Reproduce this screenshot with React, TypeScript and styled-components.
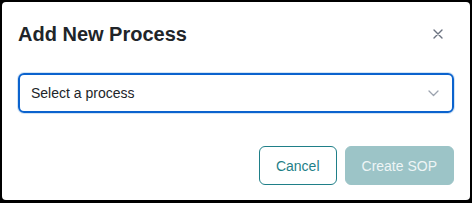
import * as React from "react";
import styled, { createGlobalStyle } from "styled-components";

const GlobalStyle = createGlobalStyle`
	html, body {
		margin: 0;
		padding: 0;
		background: #000;
	}

	body {
		font-family: "Liberation Sans", Arial, sans-serif;
		width: 472px;
		height: 203px;
		overflow: hidden;
	}

	* {
		box-sizing: border-box;
	}
`;

const Modal = styled.div`
	margin: 2px 2px 0 2px;
	width: 468px;
	height: 198px;
	background: #fff;
	border-radius: 4px;
	padding: 20px 16px 15px 16px;
	display: flex;
	flex-direction: column;
`;

const Header = styled.div`
	display: flex;
	align-items: center;
	justify-content: space-between;
`;

const Title = styled.h2`
	margin: 0;
	font-size: 20px;
	line-height: 24px;
	font-weight: 700;
	color: #212529;
`;

const CloseButton = styled.button`
	border: none;
	background: transparent;
	width: 24px;
	height: 24px;
	padding: 0;
	margin-right: 4px;
	display: flex;
	align-items: center;
	justify-content: center;
	cursor: pointer;
`;

const SelectBox = styled.div`
	margin-top: 27px;
	height: 40px;
	border: 2px solid #0b63ce;
	border-radius: 6px;
	box-shadow: 0 0 0 1px #d3e4f4;
	display: flex;
	align-items: center;
	justify-content: space-between;
	padding: 0 13px 0 11px;
	font-size: 14px;
	color: #212529;
`;

const Footer = styled.div`
	margin-top: auto;
	display: flex;
	justify-content: flex-end;
	gap: 8px;
`;

const Button = styled.button<{ $primary?: boolean }>`
	height: 39px;
	padding: 0 16px;
	border-radius: 6px;
	font-family: "Liberation Sans", Arial, sans-serif;
	font-size: 14px;
	border: 1px solid ${(p) => (p.$primary ? "#9cc4c7" : "#1f7f88")};
	background: ${(p) => (p.$primary ? "#9cc4c7" : "#fff")};
	color: ${(p) => (p.$primary ? "#eef5f6" : "#1f7f88")};
	cursor: ${(p) => (p.$primary ? "default" : "pointer")};
`;

const CloseIcon = () => (
	<svg width="10" height="10" viewBox="0 0 10 10">
		<path
			d="M1 1L9 9M9 1L1 9"
			stroke="#6b7280"
			strokeWidth="1.4"
			strokeLinecap="round"
		/>
	</svg>
);

const Chevron = () => (
	<svg width="11" height="7" viewBox="0 0 11 7">
		<path
			d="M1 1L5.5 5.5L10 1"
			stroke="#9ca3af"
			strokeWidth="1.3"
			fill="none"
			strokeLinecap="round"
			strokeLinejoin="round"
		/>
	</svg>
);

export default function App() {
	return (
		<>
			<GlobalStyle />
			<Modal>
				<Header>
					<Title>Add New Process</Title>
					<CloseButton aria-label="Close">
						<CloseIcon />
					</CloseButton>
				</Header>
				<SelectBox>
					<span>Select a process</span>
					<Chevron />
				</SelectBox>
				<Footer>
					<Button>Cancel</Button>
					<Button $primary disabled>
						Create SOP
					</Button>
				</Footer>
			</Modal>
		</>
	);
}
